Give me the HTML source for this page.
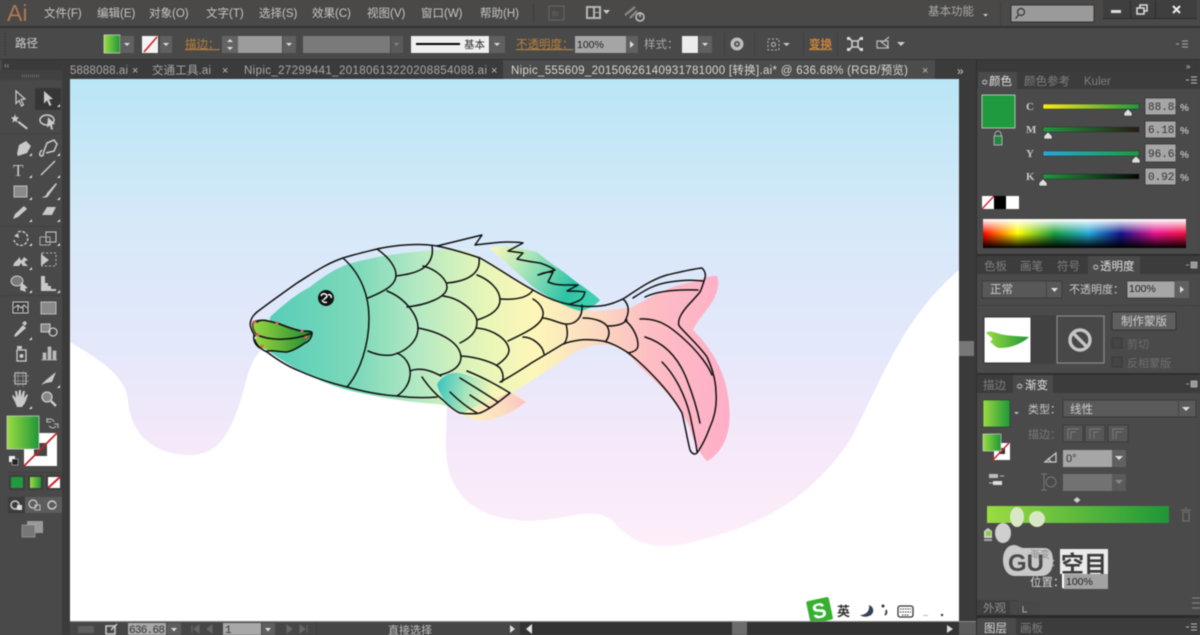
<!DOCTYPE html>
<html lang="zh"><head><meta charset="utf-8"><title>Illustrator</title>
<style>
html,body{margin:0;padding:0;width:1200px;height:635px;overflow:hidden;background:#474747}
svg{display:block;filter:blur(.4px)}
text{font-family:"Liberation Sans","Noto Sans CJK SC",sans-serif;fill:#c4c4c4;font-size:11px}
.m{font-size:11.5px;fill:#c6c6c6}
.o{fill:#b9803c;font-size:11.5px;text-decoration:underline}
.k{fill:#2b2b2b}
.mono{font-family:"Liberation Mono",monospace;fill:#333;font-size:11px}
.i{fill:#c9c9c9}
.f path{fill:none;stroke:#111;stroke-width:1.5;stroke-linecap:round;stroke-linejoin:round}
</style></head><body>
<svg width="1200" height="635" viewBox="0 0 1200 635" xmlns="http://www.w3.org/2000/svg">
<defs>
<linearGradient id="sky" x1="0" y1="0" x2="0" y2="1"><stop offset="0" stop-color="#b9e6f5"/><stop offset=".27" stop-color="#d6e9f9"/><stop offset=".5" stop-color="#e5e8fb"/><stop offset=".7" stop-color="#f7e9f9"/><stop offset=".85" stop-color="#fdeefa"/><stop offset="1" stop-color="#fff2fc"/></linearGradient>
<linearGradient id="body" gradientUnits="userSpaceOnUse" x1="265" y1="0" x2="730" y2="0"><stop offset="0" stop-color="#56cdb8"/><stop offset=".2" stop-color="#7dd9ba"/><stop offset=".33" stop-color="#b4e9c3"/><stop offset=".47" stop-color="#e6f6b8"/><stop offset=".58" stop-color="#fdf7b8"/><stop offset=".7" stop-color="#fcdcc0"/><stop offset=".82" stop-color="#fdbfc3"/><stop offset="1" stop-color="#ffaec8"/></linearGradient>
<linearGradient id="dorsal" gradientUnits="userSpaceOnUse" x1="490" y1="248" x2="590" y2="300"><stop offset="0" stop-color="#fdf7b8"/><stop offset=".35" stop-color="#a9e5b8"/><stop offset=".8" stop-color="#2cc3a6"/><stop offset="1" stop-color="#3fd0b0"/></linearGradient>
<linearGradient id="fin" gradientUnits="userSpaceOnUse" x1="437" y1="385" x2="510" y2="400"><stop offset="0" stop-color="#3cc4c0"/><stop offset=".4" stop-color="#a7e4bb"/><stop offset=".75" stop-color="#f3f7b8"/><stop offset="1" stop-color="#fdf7b8"/></linearGradient>
<linearGradient id="fin2" gradientUnits="userSpaceOnUse" x1="460" y1="415" x2="528" y2="398"><stop offset="0" stop-color="#fdf7b8"/><stop offset=".6" stop-color="#fddcc0"/><stop offset="1" stop-color="#fbc0c0"/></linearGradient>
<linearGradient id="lip" x1="0" y1="0" x2="1" y2="0"><stop offset="0" stop-color="#98d63f"/><stop offset="1" stop-color="#1f8a33"/></linearGradient>
<linearGradient id="g" x1="0" y1="0" x2="1" y2="0"><stop offset="0" stop-color="#9bdc42"/><stop offset="1" stop-color="#1e9638"/></linearGradient>
<linearGradient id="spec" x1="0" y1="0" x2="1" y2="0"><stop offset="0" stop-color="#f00"/><stop offset=".17" stop-color="#ff0"/><stop offset=".35" stop-color="#1a9c3c"/><stop offset=".52" stop-color="#22a8d8"/><stop offset=".68" stop-color="#14148c"/><stop offset=".85" stop-color="#e8128c"/><stop offset="1" stop-color="#f01040"/></linearGradient>
<linearGradient id="wh" x1="0" y1="0" x2="0" y2="1"><stop offset="0" stop-color="#fff"/><stop offset=".5" stop-color="#fff" stop-opacity="0"/></linearGradient>
<linearGradient id="bl" x1="0" y1="0" x2="0" y2="1"><stop offset=".5" stop-color="#000" stop-opacity="0"/><stop offset="1" stop-color="#000"/></linearGradient>
<linearGradient id="cy" x1="0" y1="0" x2="1" y2="0"><stop offset="0" stop-color="#ffe91a"/><stop offset="1" stop-color="#1f9a3f"/></linearGradient>
<linearGradient id="mg" x1="0" y1="0" x2="1" y2="0"><stop offset="0" stop-color="#1f9a3f"/><stop offset="1" stop-color="#2a1a12"/></linearGradient>
<linearGradient id="yy" x1="0" y1="0" x2="1" y2="0"><stop offset="0" stop-color="#28a8d8"/><stop offset="1" stop-color="#1f9a3f"/></linearGradient>
<linearGradient id="kk" x1="0" y1="0" x2="1" y2="0"><stop offset="0" stop-color="#1f9a3f"/><stop offset="1" stop-color="#050505"/></linearGradient>
</defs>

<!-- base -->
<rect width="1200" height="635" fill="#474747"/>
<!-- menu bar -->
<rect width="1200" height="27" fill="#4a4948"/>
<rect y="26" width="1200" height="2" fill="#333"/>
<text x="7" y="21" style="font-size:23px;fill:#ad7850;font-weight:400">Ai</text>
<g class="mt">
<text class="m" x="44" y="17">文件(F)</text><text class="m" x="97" y="17">编辑(E)</text><text class="m" x="149" y="17">对象(O)</text><text class="m" x="206" y="17">文字(T)</text><text class="m" x="259" y="17">选择(S)</text><text class="m" x="312" y="17">效果(C)</text><text class="m" x="367" y="17">视图(V)</text><text class="m" x="421" y="17">窗口(W)</text><text class="m" x="480" y="17">帮助(H)</text>
</g>
<rect x="533" y="3" width="1" height="20" fill="#3c3c3c"/>
<rect x="549" y="6" width="15" height="14" fill="none" stroke="#666"/><text x="552" y="16" style="font-size:7px;fill:#666">Br</text>
<rect x="586" y="6" width="15" height="13" fill="#b5b5b5"/><rect x="588" y="8" width="5" height="9" fill="#444"/><rect x="595" y="8" width="4" height="4" fill="#444"/><rect x="595" y="13" width="4" height="4" fill="#444"/>
<path d="M603 10h7l-3.500 4z" fill="#ccc"/>
<path d="M625 15l10-8M630 18l7-7" stroke="#8a8a8a" stroke-width="2.200"/><circle cx="640" cy="17" r="4" fill="none" stroke="#c2c2c2" stroke-width="1.500"/><rect x="639.300" y="12" width="1.500" height="5" fill="#c2c2c2"/>
<text x="928" y="15" style="font-size:11.5px;fill:#a8a8a8">基本功能</text>
<path d="M983 14h5l-2.500 2.500z" fill="#ccc"/>
<rect x="1000" y="2" width="1" height="24" fill="#3e3e3e"/>
<rect x="1011" y="5" width="83" height="17" fill="#9a9a9a" stroke="#333"/>
<circle cx="1021" cy="12" r="3.500" fill="none" stroke="#333" stroke-width="1.200"/><path d="M1018.500 15l-3 3.500" stroke="#333" stroke-width="1.200"/>
<rect x="1103" y="0" width="94" height="18" fill="#3f3f3f"/><rect x="1103" y="18" width="94" height="1" fill="#2a2a2a"/><rect x="1130" y="0" width="1" height="18" fill="#2d2d2d"/><rect x="1155" y="0" width="1" height="18" fill="#2d2d2d"/>
<rect x="1111" y="10" width="10" height="3" fill="#ddd"/>
<rect x="1140" y="5" width="7" height="6" fill="none" stroke="#ddd" stroke-width="1.500"/><rect x="1137" y="8" width="7" height="6" fill="#3f3f3f" stroke="#ddd" stroke-width="1.500"/>
<path d="M1173 6l7 7M1180 6l-7 7" stroke="#eee" stroke-width="2"/>

<!-- control bar -->
<rect y="28" width="1200" height="32" fill="#494949"/>
<rect y="59" width="1200" height="1" fill="#333"/>
<path d="M5 33v22" stroke="#333" stroke-dasharray="1 2" stroke-width="2"/>
<text x="15" y="47" style="font-size:11.500px;fill:#d2d2d2">路径</text>
<rect x="104" y="35" width="16" height="18" fill="url(#g)" stroke="#ddd" stroke-width=".7"/><rect x="120" y="36" width="14" height="17" fill="#606060"/><path d="M124 43h6l-3 3z" fill="#ddd"/>
<rect x="142" y="36" width="16" height="17" fill="#f4f4f4"/><path d="M144 52l13-15" stroke="#d01f2e" stroke-width="1.600"/><rect x="160" y="36" width="12" height="17" fill="#606060"/><path d="M163 43h6l-3 3z" fill="#ddd"/>
<text class="o" x="185" y="48">描边：</text>
<rect x="222" y="36" width="16" height="17" fill="#636363"/><path d="M227 42l3-3 3 3zM227 47l3 3 3-3z" fill="#ddd"/><rect x="238" y="36" width="44" height="17" fill="#9c9c9c"/><rect x="283" y="36" width="13" height="17" fill="#606060"/><path d="M286 43h6l-3 3z" fill="#ddd"/>
<rect x="303" y="36" width="87" height="17" fill="#7a7a7a"/><rect x="391" y="36" width="12" height="17" fill="#5a5a5a"/><path d="M394 43h5l-2.500 3z" fill="#888"/>
<rect x="411" y="36" width="78" height="17" fill="#efefef"/><rect x="416" y="43" width="44" height="2" fill="#000"/><text x="464" y="48" class="k" style="font-size:10.500px">基本</text><rect x="490" y="36" width="15" height="17" fill="#606060"/><path d="M494 43h6l-3 3z" fill="#ddd"/>
<text class="o" x="516" y="48">不透明度：</text>
<rect x="575" y="36" width="51" height="17" fill="#a5a5a5"/><text x="577" y="48" style="font-size:10.500px;fill:#222">100%</text><rect x="626" y="36" width="12" height="17" fill="#606060"/><path d="M630 41l4 3.500-4 3.500z" fill="#ddd"/>
<text x="644" y="48" style="font-size:11.500px;fill:#aaa">样式：</text>
<rect x="682" y="36" width="16" height="17" fill="#ececec"/><rect x="699" y="36" width="13" height="17" fill="#606060"/><path d="M702 43h6l-3 3z" fill="#ddd"/>
<rect x="724" y="32" width="1" height="24" fill="#3e3e3e"/><rect x="754" y="32" width="1" height="24" fill="#3e3e3e"/><rect x="803" y="32" width="1" height="24" fill="#3e3e3e"/><rect x="837" y="32" width="1" height="24" fill="#3e3e3e"/>
<circle cx="737" cy="44" r="6.500" fill="#bdbdbd"/><circle cx="737" cy="44" r="3" fill="#555"/><circle cx="737" cy="44" r="1" fill="#ddd"/>
<rect x="768" y="39" width="11" height="11" fill="none" stroke="#bbb" stroke-dasharray="2 2"/><circle cx="773.500" cy="44.500" r="2" fill="none" stroke="#bbb"/><path d="M783 43h7l-3.500 3z" fill="#ccc"/>
<text x="809" y="48" style="font-size:11.500px;fill:#c8843a;text-decoration:underline;font-weight:700">变换</text>
<path d="M849 38l3 3h6l3-3M849 50l3-3h6l3 3M852 41v6M858 41v6" fill="none" stroke="#ccc" stroke-width="1.600"/><path d="M847 37h3v3h-3zM860 37h3v3h-3zM847 48h3v3h-3zM860 48h3v3h-3z" fill="#ddd"/>
<path d="M877 41h11v7h-11zM880 41l9 7M889 37l-6 5" fill="none" stroke="#bbb" stroke-width="1.200"/><path d="M897 42h8l-4 4z" fill="#ccc"/>
<path d="M1176 44h3M1182 41h6M1182 44h6M1182 47h6" stroke="#aaa"/>

<!-- tab bar -->
<rect x="62" y="60" width="914" height="20" fill="#3b3b3b"/>
<text x="70" y="74" textLength="58" lengthAdjust="spacing" style="font-size:11.500px;fill:#a8a8a8">5888088.ai</text>
<text x="132" y="74" style="font-size:11px;fill:#bbb">×</text>
<text x="152" y="74" textLength="59" lengthAdjust="spacing" style="font-size:11.500px;fill:#a8a8a8">交通工具.ai</text>
<text x="222" y="74" style="font-size:11px;fill:#bbb">×</text>
<text x="244" y="74" textLength="243" lengthAdjust="spacing" style="font-size:11.500px;fill:#a8a8a8">Nipic_27299441_20180613220208854088.ai</text>
<text x="491" y="74" style="font-size:11px;fill:#bbb">×</text>
<rect x="503" y="60" width="432" height="20" fill="#4c4c4c"/>
<text x="511" y="74" textLength="397" lengthAdjust="spacing" style="font-size:11.500px;fill:#d8d8d8">Nipic_555609_20150626140931781000 [转换].ai* @ 636.68% (RGB/预览)</text>
<text x="922" y="74" style="font-size:11px;fill:#bbb">×</text>
<text x="957" y="75" style="font-size:12px;fill:#ccc">»</text>

<!-- canvas -->
<rect x="70" y="79" width="889" height="543" fill="url(#sky)"/>
<path d="M70 342C100 360 125 375 128 400C131 440 160 455 190 455C225 455 235 420 245 385C250 365 255 355 262 350L300 365L447 392L446 440C444 490 470 515 515 520C560 525 590 503 612 520C632 545 660 553 700 540C760 525 810 500 850 440C880 385 900 320 959 270V622H70Z" fill="#fff"/>

<!-- fish fills -->
<path d="M270 317C285 303 298 293 310 287C325 275 340 266 352 263C380 255 410 252 437 250C455 248 470 250 480 258C500 270 520 285 533 290C550 298 565 304 590 311C600 312 610 309 630 308C650 298 670 285 693 282C705 278 712 275 717 276C720 283 718 295 708 308C700 318 695 325 693 330C708 345 722 365 727 390C731 410 731 430 723 445C718 453 712 459 707 461C698 452 692 438 690 428C680 405 660 385 640 367C630 355 625 350 610 345C595 344 585 346 575 352C565 360 553 366 540 375C530 382 520 388 513 392L526 402C510 415 490 422 470 418C455 412 448 405 437 404C410 402 380 398 347 390C320 382 295 370 270 352Z" fill="url(#body)"/>
<path d="M490 248C505 243 525 250 537 252C548 262 562 270 570 277C580 285 592 292 600 300C595 306 587 310 580 311C560 305 545 295 533 287C520 275 505 262 490 248Z" fill="url(#dorsal)"/>
<path d="M437 384C442 376 450 372 458 373C470 375 490 382 510 393L488 409C478 413 468 414 462 413C450 407 440 398 437 384Z" fill="url(#fin)"/>
<path d="M462 413L510 392L526 402C510 415 490 422 476 420Z" fill="url(#fin2)"/>

<!-- mouth -->
<path d="M253 322C262 318 270 322 277 323C287 327 295 330 302 331C307 331 312 331 312 333C312 337 306 337 300 339C285 342 268 339 257 335C253 331 252 327 253 322Z" fill="url(#lip)" stroke="#5a3a20" stroke-width="1.500"/>
<path d="M257 335C268 340 290 342 312 333C310 340 298 349 287 352C275 352 265 350 260 347C256 343 255 339 257 335Z" fill="url(#lip)"/>

<!-- outline -->
<g class="f">
<path d="M437 246C419 243 395 245 377 249C365 252 352 255 343 258C325 264 310 275 297 283C280 295 265 306 257 312C251 317 249 323 251 328C252 332 254 334 255 336"/>
<path d="M255 340C256 345 262 350 267 352C275 358 285 365 297 370C315 378 330 383 347 387C365 392 380 395 397 396C412 398 425 398 437 397"/>
<path d="M437 246C452 249 468 254 480 258C498 268 516 281 533 290C545 297 556 302 568 304C580 307 590 307 600 306C610 305 616 302 623 299C637 290 650 280 667 275C680 272 692 269 702 268C705 271 706 274 705 278C703 284 702 288 700 292C692 302 684 308 680 317C678 322 678 325 680 327C690 338 700 347 707 357C713 370 716 382 716 393C717 405 715 416 710 427C706 438 702 446 697 453C695 455 692 454 690 450C687 438 685 425 682 413C676 402 668 392 660 383C650 372 638 360 627 352C619 347 612 343 603 341C595 340 588 339 580 340C573 341 568 342 563 344C553 350 545 355 533 362C522 369 510 377 500 382"/>
<path d="M437 246L482 235L475 245C485 244 497 242 507 242C514 242 519 242 523 243L508 251L523 253L517 259C525 261 533 262 540 263C546 265 551 267 555 270L538 275C544 272 549 272 553 272L548 282C555 285 560 285 567 285C571 285 575 285 578 285L567 291C573 291 579 291 585 292C584 296 582 299 580 300C577 302 573 303 570 304"/>
<path d="M257 322C263 318 270 322 277 323C287 327 295 330 302 331C307 331 312 331 312 333C312 338 308 342 305 343C298 348 292 351 287 352C280 352 272 350 267 351" style="stroke-width:1.500"/>
<path d="M257 335C268 340 290 342 312 333" style="stroke-width:1.500"/>
<path d="M254 335C253 340 255 345 260 348" style="stroke-width:1.500"/>
<path d="M343 258C362 275 369 297 369 318C369 345 360 372 347 387"/>
<path d="M377 249C390 258 396 268 396 275C396 285 385 291 368 298"/>
<path d="M432 246C434 258 428 266 420 270C412 274 403 275 396 276"/>
<path d="M387 291C405 298 418 315 418 328C418 342 405 352 392 355C382 356 375 354 368 351"/>
<path d="M423 266C438 270 447 280 447 287C447 298 425 305 407 307"/>
<path d="M479 258C481 272 470 281 447 283"/>
<path d="M443 296C460 298 477 312 477 322C477 332 470 338 460 343"/>
<path d="M477 275C490 280 500 290 500 300C500 310 490 316 477 320"/>
<path d="M418 328C440 332 460 342 461 357C461 367 452 372 440 375"/>
<path d="M397 353C408 358 411 368 410 376C409 385 403 392 397 396"/>
<path d="M410 371C420 367 432 371 441 376"/>
<path d="M477 328C495 330 508 340 509 350C509 356 503 361 497 365"/>
<path d="M461 356C478 357 495 363 500 368C503 372 504 378 502 382"/>
<path d="M500 299C515 300 528 298 533 290"/>
<path d="M533 299C540 303 544 310 543 315C542 325 525 333 508 341"/>
<path d="M523 337C533 337 543 346 544 354"/>
<path d="M543 318C552 319 558 323 565 324C575 325 583 318 582 305"/>
<path d="M566 324C568 332 568 338 564 344"/>
<path d="M583 318C595 318 606 322 608 328C610 333 609 337 606 341"/>
<path d="M608 326C618 326 623 324 627 320"/>
<path d="M623 299C629 304 630 312 625 321"/>
<path d="M626 321C634 328 638 338 638 345C638 350 634 352 628 353"/>
<path d="M633 298C645 290 655 284 670 282C682 280 695 280 703 281"/>
<path d="M645 297C655 292 670 289 698 290"/>
<path d="M640 319C660 318 672 328 685 340C698 352 708 365 712 375"/>
<path d="M645 337C665 343 677 357 685 375C692 392 697 408 700 423"/>
<path d="M662 362C675 375 685 395 690 415C693 430 696 442 697 452"/>
<path d="M422 377C428 386 435 394 443 400C450 407 455 411 460 413C468 414 475 414 480 413C490 409 500 401 510 393C497 385 482 377 467 371"/>
<path d="M460 378C473 386 486 394 498 402"/>
<path d="M450 392C458 400 468 408 477 413"/>
<path d="M470 395C477 400 484 404 490 408"/>
</g>
<g fill="#f0566a"><circle cx="254" cy="322" r="1.500"/><circle cx="277" cy="323" r="1.500"/><circle cx="302" cy="331" r="1.500"/><circle cx="306" cy="337" r="1.500"/><circle cx="258" cy="335" r="1.500"/><circle cx="262" cy="346" r="1.500"/></g>
<!-- eye -->
<circle cx="326" cy="298" r="8" fill="#111"/>
<path d="M321 296c1-3 5-3 6 0 0 2-3 2-3 4M328 295c2-1 4 1 3 3M322 300c1 2 3 3 5 2" fill="none" stroke="#fff" stroke-width="1.500"/>

<!-- IME -->
<g transform="rotate(-12 819 610)"><rect x="808" y="599" width="23" height="23" rx="2" fill="#37b030"/><text x="812" y="618" style="font-size:21px;font-weight:700;fill:#fff">S</text></g>
<text x="837" y="616" style="font-size:13px;fill:#333;font-weight:700">英</text>
<path d="M869 605c1 6-3 10-9 10 3 3 12 2 13-3 1-3-1-6-4-7z" fill="#33405a"/>
<circle cx="883" cy="606" r="1.500" fill="#333"/><path d="M886 610c1 2 0 4-1 5" stroke="#333" stroke-width="1.800" fill="none"/>
<rect x="898" y="606" width="15" height="11" rx="2" fill="none" stroke="#333" stroke-width="1.300"/><path d="M900 609h11M900 612h11M902 615h7" stroke="#333" stroke-dasharray="1.500 1"/>
<rect x="923" y="615" width="5" height="1" fill="#bbb"/><circle cx="942" cy="615" r="1.200" fill="#333"/>

<!-- scrollbars -->
<rect x="959" y="80" width="17" height="542" fill="#3a3a3a"/>
<rect x="959" y="341" width="15" height="15" fill="#777"/>

<!-- status bar -->
<rect x="70" y="621" width="906" height="1" fill="#888"/>
<rect x="70" y="622" width="450" height="13" fill="#464646"/>
<rect x="520" y="622" width="440" height="13" fill="#333"/>
<rect x="732" y="622" width="15" height="13" fill="#6c6c6c"/>
<rect x="959" y="622" width="17" height="13" fill="#5c5c5c"/>
<path d="M947 625l6 4-6 4z" fill="#ddd"/>
<path d="M532 624l-6 5 6 5z" fill="#e5e5e5"/>
<path d="M510 625l5 4-5 4z" fill="#ddd"/>
<rect x="78" y="626" width="16" height="7" fill="#5e5e5e"/><rect x="106" y="626" width="9" height="8" fill="none" stroke="#ccc" stroke-width="1.500"/><path d="M111 630l6-6" stroke="#ccc" stroke-width="1.500"/>
<rect x="128" y="623" width="38" height="12" fill="#a8a8a8"/><text x="129" y="633" class="mono" textLength="36">636.68</text>
<rect x="167" y="623" width="14" height="12" fill="#5e5e5e"/><path d="M171 628h6l-3 3.500z" fill="#ddd"/>
<path d="M192 625v8M199 625l-5 4 5 4zM212 625l-5 4 5 4z" fill="#666" stroke="#666"/>
<rect x="223" y="623" width="38" height="12" fill="#a8a8a8"/><text x="225" y="633" class="mono">1</text>
<rect x="262" y="623" width="13" height="12" fill="#5e5e5e"/><path d="M265 628h6l-3 3.500z" fill="#ddd"/>
<path d="M287 625l5 4-5 4zM300 625l5 4-5 4zM307 625v8" fill="#666" stroke="#666"/>
<rect x="316" y="622" width="1" height="13" fill="#3d3d3d"/>
<text x="388" y="634" style="font-size:11px;fill:#c0c0c0">直接选择</text>

<!-- left tools -->
<rect x="0" y="60" width="62" height="575" fill="#494949"/>
<rect x="2" y="60" width="60" height="10" fill="#3a3a3a"/>
<rect x="0" y="70" width="62" height="10" fill="#414141"/>
<text x="4" y="68" style="font-size:8px;fill:#aaa">‹‹</text>
<path d="M22 76h18" stroke="#666" stroke-dasharray="1 1" stroke-width="3"/>
<rect x="62" y="60" width="8" height="575" fill="#3b3b3b"/>
<rect x="35" y="88" width="26" height="22" fill="#363636"/>
<g class="i">
<path d="M16 91l9 8-4 .5 2.500 5.500-2 1-2.500-5.500-3 3z" fill="none" stroke="#ccc" stroke-width="1.200"/>
<path d="M44 91l9 8-4 .5 2.500 5.500-2 1-2.500-5.500-3 3z"/>
<path d="M15 114l1 3 3 .5-2 2 .5 3-2.500-1.500-2.500 1.500.5-3-2-2 3-.5zM19 121l9 7-1.500 1.500-9-7z"/>
<ellipse cx="47" cy="120" rx="7" ry="5" fill="none" stroke="#ccc" stroke-width="1.500"/><path d="M48 117l7 7-3 .5 1 5-2 0-1-4-3 2z"/>
<path d="M17 154l2-9 7-4 5 5-4 7-9 3z"/><path d="M42 150c-3 3-3 6 0 6 2 0 1-4 2-5l3-8 7-3 3 4-3 7-8 2" fill="none" stroke="#ccc" stroke-width="1.500"/>
<text x="13" y="176" style="font-size:17px;fill:#ccc;font-family:'Liberation Serif',serif">T</text>
<path d="M41 175l14-14" stroke="#ccc" stroke-width="1.400"/>
<rect x="14" y="186" width="13" height="11" fill="#8a8a8a" stroke="#c0c0c0"/>
<path d="M41 197c3 0 5-1 6-4l9-10 1 1-8 11c-1 3-5 3-8 2z"/>
<path d="M13 219l2-5 9-8 3 3-9 8z"/><path d="M42 215l5-8h9l-4 8z"/>
<path d="M18 232a7 7 0 1 1-4 8" fill="none" stroke="#ccc" stroke-width="1.400" stroke-dasharray="3 1.500"/><path d="M14 236l4-3 1 5z"/>
<rect x="46" y="232" width="10" height="10" fill="none" stroke="#ccc"/><rect x="40" y="237" width="10" height="8" fill="none" stroke="#aaa"/>
<path d="M13 266c2-6 5-5 6-9 2 2 1 4 3 3l2-3 4 3c-2 1-4 1-3 3l3 3h-5l-2-3-2 3h-6z"/>
<path d="M41 254l8 6-8 6z"/><rect x="42" y="253" width="14" height="13" fill="none" stroke="#bbb" stroke-dasharray="2 2"/>
<ellipse cx="17" cy="281" rx="6" ry="5" fill="#7a7a7a" stroke="#ccc"/><path d="M21 282l7 6-3 .5 1 3.500-6-2z"/>
<path d="M41 276v15h15v-2h-5v-3h-3v-3h-3v-7z"/>
<rect x="13" y="302" width="15" height="11" fill="#3b3b3b" stroke="#ccc"/><path d="M14 308l4-3 3 3 3-3 3 3M18 305v6M23 307v5" stroke="#ccc" fill="none"/>
<rect x="41" y="302" width="15" height="12" fill="#8a8a8a" stroke="#bbb"/>
<path d="M15 334l8-9 3 3-9 8-3 1z"/><path d="M22 323l3-2 2 2-2 3z"/>
<rect x="41" y="324" width="9" height="8" fill="#888" stroke="#ccc"/><circle cx="53" cy="332" r="4" fill="none" stroke="#ccc" stroke-width="1.300"/>
<rect x="17" y="350" width="9" height="11" fill="none" stroke="#ccc" stroke-width="1.300"/><circle cx="21.500" cy="356" r="2" fill="#ccc"/><rect x="17" y="346" width="5" height="3"/>
<path d="M41 360h16M43 360v-7h3v7zM48 360v-13h3v13zM53 360v-9h3v9z" fill="#bbb" stroke="#bbb" stroke-width=".7"/>
<rect x="15" y="373" width="11" height="11" fill="none" stroke="#bbb" stroke-width="1.200"/><path d="M13 376h16M13 381h16M18 371v16M23 371v16" stroke="#999" stroke-width=".7"/>
<path d="M41 385l5-5 10-8-4 10-6 1z"/>
<path d="M15 402l-3-6 1-1 3 3-1-7 2 0 1 6 1-7 2 0v7l2-6 2 0-1 7 3-4 1 1-3 8-3 4h-5z"/>
<circle cx="47" cy="397" r="5" fill="#888" stroke="#ccc" stroke-width="1.300"/><path d="M51 401l5 5" stroke="#ccc" stroke-width="2.400"/>
</g>
<path d="M57 107h3v-3zM32 156h-3l3-3zM60 156h-3l3-3zM32 178h-3l3-3zM60 178h-3l3-3zM32 200h-3l3-3zM60 200h-3l3-3zM32 222h-3l3-3zM60 222h-3l3-3zM32 246h-3l3-3zM60 246h-3l3-3zM32 270h-3l3-3zM32 293h-3l3-3zM60 293h-3l3-3zM32 340h-3l3-3zM60 388h-3l3-3zM32 409h-3l3-3z" fill="#ddd"/>
<rect x="0" y="133" width="62" height="1" fill="#404040"/><rect x="0" y="226" width="62" height="1" fill="#404040"/><rect x="0" y="295" width="62" height="1" fill="#404040"/>
<!-- fill/stroke -->
<rect x="24" y="433" width="33" height="33" fill="#fff"/><rect x="34" y="443" width="13" height="13" fill="#444"/>
<path d="M24 466l33-33" stroke="#c9202c" stroke-width="1.800"/>
<rect x="7" y="416" width="32" height="33" fill="url(#g)" stroke="#ccc" stroke-width=".8"/>
<path d="M47 420c3-2 6-1 7 2M56 426c-2 3-5 2-7 0M47 418v4h4M58 428v-4h-4" fill="none" stroke="#bbb" stroke-width="1.100"/>
<rect x="9" y="456" width="6" height="6" fill="#eee"/><rect x="12" y="459" width="6" height="6" fill="#222" stroke="#ddd" stroke-width=".5"/>
<rect x="7" y="472" width="56" height="1" fill="#3e3e3e"/>
<rect x="9" y="475" width="16" height="15" fill="#3e3e3e"/><rect x="11" y="477" width="12" height="11" fill="#1f9a3f"/>
<rect x="28" y="475" width="15" height="15" fill="#3e3e3e"/><rect x="30" y="477" width="11" height="11" fill="url(#g)"/>
<rect x="46" y="475" width="16" height="15" fill="#3e3e3e"/><rect x="48" y="477" width="12" height="11" fill="#fff"/><path d="M48 488l12-11" stroke="#d01f2e" stroke-width="2"/>
<rect x="8" y="497" width="54" height="16" fill="#5c5c5c"/><rect x="8" y="497" width="17" height="16" fill="#3c3c3c"/>
<circle cx="15" cy="505" r="4" fill="none" stroke="#ccc" stroke-width="1.500"/><rect x="17" y="505" width="5" height="5" fill="#ddd"/>
<circle cx="33" cy="504" r="4" fill="none" stroke="#bbb" stroke-width="1.500"/><rect x="35" y="505" width="5" height="5" fill="none" stroke="#bbb"/>
<circle cx="52" cy="505" r="4" fill="none" stroke="#ccc" stroke-width="1.500"/><path d="M52 505h4" stroke="#5c5c5c" stroke-width="2"/>
<rect x="27" y="521" width="16" height="12" fill="#9a9a9a"/><rect x="22" y="525" width="13" height="12" fill="#777" stroke="#aaa" stroke-width=".6"/>

<!-- right panels -->
<rect x="976" y="60" width="224" height="575" fill="#4a4a4a"/>
<rect x="976" y="60" width="224" height="12" fill="#3a3a3a"/>
<rect x="976" y="72" width="224" height="17" fill="#3c3c3c"/>
<rect x="976" y="60" width="1" height="575" fill="#2e2e2e"/>
<text x="1186" y="69" style="font-size:8px;fill:#ccc">»</text>
<rect x="978" y="72" width="39" height="17" fill="#4a4a4a"/>
<text x="981" y="85" style="font-size:9px;fill:#ddd">≎</text><text x="989" y="85" style="font-size:11.500px;fill:#e2e2e2">颜色</text>
<text x="1024" y="85" style="font-size:11.500px;fill:#7f7f7f">颜色参考</text><text x="1084" y="85" style="font-size:11.500px;fill:#7f7f7f">Kuler</text>
<path d="M1186 80h3M1191 77h6M1191 80h6M1191 83h6" stroke="#bbb"/>
<rect x="982" y="95" width="33" height="33" fill="#1f9a3f" stroke="#a8c8a8"/>
<path d="M995 136v-2a3 3 0 0 1 6 0v2" fill="none" stroke="#aaa"/><rect x="994" y="136" width="8" height="9" fill="#1f8a3f" stroke="#aaa"/>
<text x="1026" y="110" style="font-size:11px;fill:#c8c8c8;font-weight:700;font-family:'Liberation Serif',serif">C</text><text x="1026" y="133" style="font-size:11px;fill:#c8c8c8;font-weight:700;font-family:'Liberation Serif',serif">M</text><text x="1026" y="157" style="font-size:11px;fill:#c8c8c8;font-weight:700;font-family:'Liberation Serif',serif">Y</text><text x="1026" y="180" style="font-size:11px;fill:#c8c8c8;font-weight:700;font-family:'Liberation Serif',serif">K</text>
<rect x="1043" y="104" width="96" height="5" fill="url(#cy)" stroke="#2a2a2a" stroke-width=".5"/>
<rect x="1043" y="127" width="96" height="5" fill="url(#mg)" stroke="#2a2a2a" stroke-width=".5"/>
<rect x="1043" y="151" width="96" height="5" fill="url(#yy)" stroke="#2a2a2a" stroke-width=".5"/>
<rect x="1043" y="174" width="96" height="5" fill="url(#kk)" stroke="#2a2a2a" stroke-width=".5"/>
<g fill="#ddd" stroke="#222" stroke-width=".5"><path d="M1128 109l4 4v3h-8v-3z"/><path d="M1048 132l4 4v3h-8v-3z"/><path d="M1136 156l4 4v3h-8v-3z"/><path d="M1043 179l4 4v3h-8v-3z"/></g>
<g fill="#a6a6a6" stroke="#333" stroke-width=".8"><rect x="1145" y="98" width="31" height="17"/><rect x="1145" y="121" width="31" height="17"/><rect x="1145" y="144" width="31" height="18"/><rect x="1145" y="168" width="31" height="17"/></g>
<text x="1148" y="110" class="mono">88.84</text><text x="1148" y="133" class="mono">6.18</text><text x="1148" y="157" class="mono">96.63</text><text x="1148" y="180" class="mono">0.92</text>
<rect x="1176" y="98" width="4" height="87" fill="#4a4a4a"/>
<text x="1180" y="111" style="font-size:10px;fill:#bbb;font-weight:700">%</text><text x="1180" y="134" style="font-size:10px;fill:#bbb;font-weight:700">%</text><text x="1180" y="158" style="font-size:10px;fill:#bbb;font-weight:700">%</text><text x="1180" y="181" style="font-size:10px;fill:#bbb;font-weight:700">%</text>
<rect x="982" y="196" width="12" height="13" fill="#fff"/><path d="M982 209l12-13" stroke="#d01f2e" stroke-width="1.300"/><rect x="994" y="196" width="12" height="13" fill="#000"/><rect x="1006" y="196" width="13" height="13" fill="#fff"/>
<rect x="983" y="219" width="203" height="29" fill="url(#spec)"/><rect x="983" y="219" width="203" height="29" fill="url(#wh)"/><rect x="983" y="219" width="203" height="29" fill="url(#bl)"/>
<rect x="976" y="254" width="224" height="2" fill="#2f2f2f"/>

<rect x="977" y="256" width="223" height="18" fill="#3c3c3c"/><rect x="1088" y="256" width="52" height="18" fill="#4a4a4a"/>
<text x="984" y="270" style="font-size:11.500px;fill:#7f7f7f">色板</text><text x="1020" y="270" style="font-size:11.500px;fill:#7f7f7f">画笔</text><text x="1057" y="270" style="font-size:11.500px;fill:#7f7f7f">符号</text>
<text x="1092" y="270" style="font-size:9px;fill:#ddd">≎</text><text x="1100" y="270" style="font-size:11.500px;fill:#e2e2e2">透明度</text>
<path d="M1186 265h3M1191 262h6v6h-6z" fill="#999" stroke="#bbb" stroke-width=".7"/>
<rect x="982" y="281" width="80" height="17" fill="#585858" stroke="#3a3a3a"/><text x="990" y="293" style="font-size:11.500px;fill:#ccc">正常</text><rect x="1046" y="282" width="1" height="15" fill="#444"/><path d="M1051 288h7l-3.500 4z" fill="#ddd"/>
<text x="1069" y="293" style="font-size:11px;fill:#ccc">不透明度：</text>
<rect x="1127" y="281" width="48" height="17" fill="#a6a6a6" stroke="#333" stroke-width=".7"/><text x="1129" y="292" style="font-size:10.500px;fill:#222">100%</text><rect x="1175" y="281" width="14" height="17" fill="#606060"/><path d="M1180 286l4 3.500-4 3.500z" fill="#ddd"/>
<rect x="977" y="305" width="223" height="1" fill="#404040"/>
<rect x="984" y="317" width="47" height="46" fill="#fff" stroke="#333"/>
<rect x="1031" y="315" width="26" height="49" fill="#414141"/>
<path d="M986 333c2-3 8-1 14 1 8 2 18 2 29 3-6 6-18 11-28 11-6 0-6-3-11-6 2-2 3-3 2-4z" fill="url(#g)"/>
<rect x="1057" y="316" width="47" height="47" fill="#484848" stroke="#8a8a8a" stroke-width="1.200"/>
<circle cx="1080" cy="340" r="10" fill="none" stroke="#c4c4c4" stroke-width="3.400"/><path d="M1073 333l14 14" stroke="#c4c4c4" stroke-width="3.400"/>
<rect x="1112" y="312" width="64" height="18" fill="#5f5f5f" stroke="#333"/><text x="1121" y="325" style="font-size:11.500px;fill:#cfcfcf">制作蒙版</text>
<rect x="1112" y="338" width="10" height="10" fill="#454545" stroke="#3a3a3a"/><text x="1127" y="348" style="font-size:11px;fill:#6e6e6e">剪切</text>
<rect x="1112" y="357" width="10" height="10" fill="#454545" stroke="#3a3a3a"/><text x="1127" y="367" style="font-size:11px;fill:#6e6e6e">反相蒙版</text>
<rect x="976" y="373" width="224" height="2" fill="#2f2f2f"/>

<rect x="977" y="375" width="223" height="18" fill="#3c3c3c"/><rect x="1013" y="375" width="40" height="18" fill="#4a4a4a"/>
<text x="983" y="389" style="font-size:11.500px;fill:#7f7f7f">描边</text><text x="1016" y="389" style="font-size:9px;fill:#ddd">≎</text><text x="1025" y="389" style="font-size:11.500px;fill:#e2e2e2">渐变</text>
<path d="M1186 384h3M1191 381h6v6h-6z" fill="#999" stroke="#bbb" stroke-width=".7"/>
<rect x="983" y="400" width="27" height="27" fill="url(#g)" stroke="#333" stroke-width=".6"/><path d="M1014 412h5l-2.500 2.500z" fill="#bbb"/>
<text x="1028" y="413" style="font-size:11px;fill:#c8c8c8">类型：</text>
<rect x="1063" y="400" width="133" height="17" fill="#5a5a5a" stroke="#3a3a3a"/><text x="1070" y="413" style="font-size:11.500px;fill:#ccc">线性</text><rect x="1178" y="401" width="1" height="15" fill="#444"/><path d="M1182 407h8l-4 4z" fill="#ddd"/>
<text x="1028" y="438" style="font-size:11px;fill:#7a7a7a">描边：</text>
<g fill="#565656" stroke="#3a3a3a"><rect x="1063" y="425" width="20" height="17"/><rect x="1085" y="425" width="20" height="17"/><rect x="1108" y="425" width="20" height="17"/></g>
<path d="M1068 439v-10h11M1071 439v-7h5M1090 439v-10h11M1094 439v-7h5M1113 439v-10h11M1116 439v-7h6" fill="none" stroke="#7a7a7a"/>
<rect x="994" y="443" width="16" height="17" fill="#fff"/><rect x="999" y="448" width="6" height="6" fill="#333"/><path d="M992 461l17-18" stroke="#c9202c" stroke-width="1.400"/>
<rect x="983" y="434" width="18" height="17" fill="url(#g)" stroke="#ddd" stroke-width=".6"/>
<rect x="989" y="474" width="9" height="4" fill="#bbb"/><path d="M1000 476h4" stroke="#bbb"/><rect x="993" y="481" width="9" height="4" fill="#ddd"/><path d="M989 483h4" stroke="#bbb"/>
<path d="M1045 462l11-9v9zM1048 458l3 4" fill="none" stroke="#ccc" stroke-width="1.200"/>
<rect x="1063" y="450" width="49" height="17" fill="#a6a6a6"/><text x="1066" y="462" style="font-size:11px;fill:#333">0°</text><rect x="1112" y="450" width="14" height="17" fill="#606060"/><path d="M1115 456h8l-4 4z" fill="#ddd"/>
<circle cx="1051" cy="482" r="5" fill="none" stroke="#777"/><path d="M1044 474v16M1041 474h6M1041 490h6" stroke="#777" fill="none"/>
<rect x="1063" y="474" width="49" height="17" fill="#727272"/><rect x="1112" y="474" width="14" height="17" fill="#5a5a5a"/><path d="M1115 480h8l-4 4z" fill="#888"/>
<path d="M1077 497l3.500 3-3.500 3-3.500-3z" fill="#ccc"/>
<rect x="987" y="506" width="182" height="17" fill="url(#g)"/>
<path d="M1181 510h10M1183 512h6v9h-6zM1185 508h2" fill="none" stroke="#6e6e6e" stroke-width="1.300"/>
<path d="M984 531l4-3 4 3v7h-8z" fill="#d0d0d0"/><rect x="986" y="531" width="5" height="5" fill="#8bd13e"/><rect x="984" y="539" width="8" height="2" fill="#aaa"/>
<ellipse cx="1017" cy="517" rx="7" ry="10" fill="#d9e8c4"/><ellipse cx="1037" cy="519" rx="8" ry="8" fill="#d9e8c4"/><ellipse cx="1003" cy="533" rx="8" ry="10" fill="#cfcfcf"/>
<!-- watermark -->
<path d="M1014 545c4 0 6 3 10 3h20c6 0 9 4 9 13s-4 15-12 15h-26c-8 0-12-8-12-16s4-15 11-15z" fill="#c9c9c9"/>
<text x="1008" y="571" style="font-size:24px;font-weight:700;fill:#4a4a4a">GU</text>
<text x="1030" y="558" style="font-size:10px;fill:#888">渐变</text>
<rect x="1060" y="549" width="48" height="25" fill="#ebebeb"/>
<text x="1061" y="572" textLength="46" style="font-size:23px;font-weight:700;fill:#3c3c3c">空目</text>
<text x="1052" y="566" style="font-size:11px;fill:#ddd">:</text>
<text x="1030" y="586" style="font-size:11.500px;fill:#d6d6d6">位置：</text>
<rect x="1063" y="574" width="45" height="15" fill="#a2a2a2"/><rect x="1062" y="574" width="2" height="14" fill="#fff"/>
<text x="1066" y="585" style="font-size:10.500px;fill:#222">100%</text>
<rect x="977" y="600" width="42" height="16" fill="#3f3f3f"/><rect x="1010" y="601" width="30" height="15" fill="#484848"/>
<text x="983" y="612" style="font-size:11.500px;fill:#8f8f8f">外观</text>
<path d="M1023 606v6h4" stroke="#aaa" fill="none"/>
<path d="M1192 598h8M1192 603h8M1192 608h8" stroke="#888"/>
<rect x="976" y="615" width="224" height="3" fill="#2b2b2b"/>
<rect x="977" y="618" width="223" height="17" fill="#3c3c3c"/><rect x="977" y="618" width="39" height="17" fill="#4a4a4a"/>
<text x="984" y="632" style="font-size:11.500px;fill:#d8d8d8">图层</text><text x="1020" y="632" style="font-size:11.500px;fill:#7f7f7f">画板</text>
<path d="M1186 627h3M1191 624h6M1191 627h6M1191 630h6" stroke="#bbb"/>
</svg>
</body></html>
